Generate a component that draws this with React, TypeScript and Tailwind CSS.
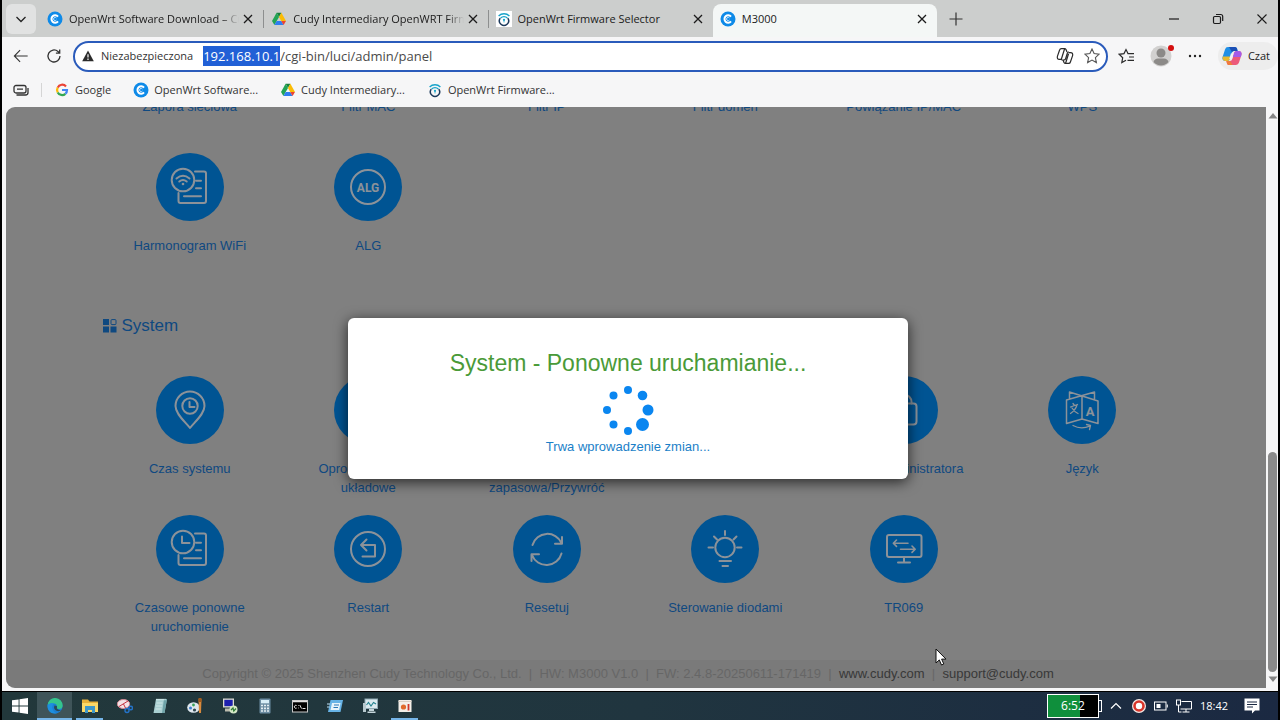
import { useEffect, useRef } from 'react';
import type { ReactNode } from 'react';
import { clsx } from 'clsx';

/* Favicons */
function CudyIcon() {
  return (
    <svg viewBox="0 0 16 16" className="size-4 shrink-0">
      <circle cx="8" cy="8" r="7.5" fill="#0e8ae8" />
      <path d="M11 5.6A3.7 3.7 0 1 0 11 10.4" fill="none" stroke="#fff" strokeWidth="2" />
      <path d="M9.4 7A1.6 1.6 0 1 0 9.4 9" fill="none" stroke="#bfe2ff" strokeWidth="1" />
    </svg>
  );
}

function DriveIcon() {
  return (
    <svg viewBox="0 0 16 16" className="size-4 shrink-0">
      <path d="M5.6 1.8h4.8L8 6z" fill="#188038" />
      <path d="M5.6 1.8L8 6 3.4 14 1 10z" fill="#22a455" />
      <path d="M10.4 1.8L15 10h-4.8L8 6z" fill="#fbbc04" />
      <path d="M5.7 10H10.2L12.6 14H3.4z" fill="#2f7df0" />
      <path d="M10.2 10H15l-2.4 4z" fill="#ea4335" />
    </svg>
  );
}

function OpenWrtIcon({ boxed = false }: { boxed?: boolean }) {
  return (
    <svg viewBox="0 0 16 16" className={clsx('size-4 shrink-0', boxed && 'bg-white')} fill="none">
      <path d="M2.6 5a7.6 7.6 0 0 1 10.8 0M4.6 7a4.8 4.8 0 0 1 6.8 0" stroke="#17a3c9" strokeWidth="1.3" />
      <path d="M4.2 7.2a4.6 4.6 0 1 0 7.6 0" stroke="#1c3a5c" strokeWidth="1.5" />
      <circle cx="8" cy="8.8" r="1.1" fill="#17a3c9" />
      <path d="M8 9v2.5" stroke="#17a3c9" strokeWidth="0.8" />
    </svg>
  );
}

function GoogleIcon() {
  return (
    <svg viewBox="0 0 16 16" className="size-4 shrink-0" fill="none" strokeWidth="2.2">
      <path d="M12 4.4A5 5 0 0 0 3.7 5.6" stroke="#ea4335" />
      <path d="M3.7 5.6a5 5 0 0 0 0 4.8" stroke="#fbbc04" />
      <path d="M3.7 10.4A5 5 0 0 0 11.4 11.8" stroke="#34a853" />
      <path d="M11.4 11.8A5 5 0 0 0 13 8H8" stroke="#4285f4" />
    </svg>
  );
}

function CloseIcon() {
  return (
    <svg viewBox="0 0 14 14" className="size-[14px] shrink-0" fill="none" stroke="#1b1b1b" strokeWidth="1.3">
      <path d="M3 3l8 8M11 3l-8 8" />
    </svg>
  );
}

const TABS = [
  { title: 'OpenWrt Software Download – Cudy', icon: <CudyIcon />, active: false },
  { title: 'Cudy Intermediary OpenWRT Firmware', icon: <DriveIcon />, active: false },
  { title: 'OpenWrt Firmware Selector', icon: <OpenWrtIcon boxed />, active: false },
  { title: 'M3000', icon: <CudyIcon />, active: true },
];

const BOOKMARKS = [
  { title: 'Google', icon: <GoogleIcon /> },
  { title: 'OpenWrt Software...', icon: <CudyIcon /> },
  { title: 'Cudy Intermediary...', icon: <DriveIcon /> },
  { title: 'OpenWrt Firmware...', icon: <OpenWrtIcon /> },
];

function TabStrip() {
  return (
    <div className="flex h-[37px] shrink-0 items-center bg-[#cccecd] pl-1">
      <button aria-label="Karty" className="flex size-[30px] items-center justify-center rounded-md bg-[#e1e2e2]">
        <svg viewBox="0 0 12 12" className="size-3" fill="none" stroke="#222" strokeWidth="1.3">
          <path d="M1.5 4L6 8.5 10.5 4" />
        </svg>
      </button>
      <div className="ml-1 flex min-w-0 flex-[0_1_897px] self-stretch pt-1">
        {TABS.map((tab, i) => (
          <div
            key={tab.title}
            className={clsx(
              'flex min-w-0 flex-1 items-center pr-2 pb-1 pl-[7px]',
              tab.active && 'rounded-t-lg bg-[#f4f7f6]',
            )}
          >
            {tab.icon}
            <span
              className={clsx(
                'ml-1.5 min-w-0 flex-1 overflow-hidden text-[11px] leading-4 whitespace-nowrap text-[#1b1b1b]',
                i < 2 && 'mask-r-from-90%',
              )}
            >
              {tab.title}
            </span>
            <button aria-label="Zamknij kartę" className="ml-0.5">
              <CloseIcon />
            </button>
            {i < 2 && <div className="-mr-2 ml-2 h-[18px] w-px bg-[#8d8f8f]" />}
          </div>
        ))}
      </div>
      <button aria-label="Nowa karta" className="ml-3">
        <svg viewBox="0 0 14 14" className="size-[14px]" stroke="#333" strokeWidth="1.2">
          <path d="M7 .5v13M.5 7h13" />
        </svg>
      </button>
      <div className="ml-auto flex items-center gap-8 pr-2.5">
        <button aria-label="Minimalizuj">
          <svg viewBox="0 0 12 12" className="size-3" stroke="#1b1b1b" strokeWidth="1.2">
            <path d="M1 6h10" />
          </svg>
        </button>
        <button aria-label="Przywróć">
          <svg viewBox="0 0 12 12" className="size-3" fill="none" stroke="#1b1b1b" strokeWidth="1.2">
            <rect x="1.5" y="3.5" width="7" height="7" rx="1.2" />
            <path d="M4 1.5h4.7a2 2 0 0 1 2 2V8" />
          </svg>
        </button>
        <button aria-label="Zamknij">
          <svg viewBox="0 0 12 12" className="size-3" stroke="#1b1b1b" strokeWidth="1.1">
            <path d="M1.5 1.5l9 9M10.5 1.5l-9 9" />
          </svg>
        </button>
      </div>
    </div>
  );
}

function Toolbar() {
  const urlRef = useRef<HTMLInputElement>(null);

  // host part of the address starts selected
  useEffect(() => {
    urlRef.current?.focus();
    urlRef.current?.setSelectionRange(0, 12);
  }, []);

  return (
    <div className="flex h-[38px] shrink-0 items-center">
      <button aria-label="Wstecz" className="ml-[11px]">
        <svg viewBox="0 0 18 18" className="size-4" fill="none" stroke="#333" strokeWidth="1.2">
          <path d="M16.5 9H1.5M8 2.5L1.5 9 8 15.5" />
        </svg>
      </button>
      <button aria-label="Odśwież" className="ml-[17px]">
        <svg viewBox="0 0 16 16" className="size-4" fill="none" stroke="#333" strokeWidth="1.3">
          <path d="M14 8a6 6 0 1 1-2-4.5l1.6 1.6M13.7 1.4v3.8H9.9" />
        </svg>
      </button>
      <div className="ml-[11px] flex h-[31px] min-w-0 flex-1 items-center rounded-full border-2 border-[#2a5bbb] bg-white pr-1.5 pl-[7px]">
        <svg viewBox="0 0 12 12" className="size-3 shrink-0">
          <path d="M6 .5L11.8 11.2H.2z" fill="#2b2b2b" />
          <path d="M6 4.2v3.4M6 8.6v1.3" stroke="#fff" strokeWidth="1.2" />
        </svg>
        <label htmlFor="url" className="ml-[7px] text-[11px] leading-4 text-[#333]">Niezabezpieczona</label>
        <input
          id="url"
          ref={urlRef}
          defaultValue="192.168.10.1/cgi-bin/luci/admin/panel"
          spellCheck={false}
          className="ml-2.5 min-w-0 flex-1 text-[13px] leading-5 text-[#4a4a4a] outline-none selection:bg-[#2160d6] selection:text-white"
        />
        <svg viewBox="0 0 18 18" className="size-[18px] shrink-0" fill="none" stroke="#2b2b2b" strokeWidth="1.2">
          <path d="M11 5L10 2.6Q9.6 1.6 8.4 1.6H5.4Q4 1.6 3.6 3L1.4 9.4Q.8 12.2 3.4 12.4H5" />
          <path d="M7 13l1 2.4q.4 1 1.6 1h3q1.4 0 1.8-1.4l2.2-6.4q.6-2.8-2-3H13" />
          <path d="M8.6 1.8L5.4 12q-.3 1 .8 1H8q1.2 0 1.6-1.2L11.4 6q.4-1 1.6-1M9.6 16.2l3-9.6" />
        </svg>
        <svg viewBox="0 0 16 16" className="ml-2.5 size-4 shrink-0" fill="none" stroke="#555" strokeWidth="1.1">
          <path d="M8 1l2.1 4.6 5 .6-3.7 3.4 1 5L8 12.1l-4.4 2.5 1-5L.9 6.2l5-.6z" />
        </svg>
      </div>
      <button aria-label="Ulubione" className="ml-2.5">
        <svg viewBox="0 0 18 16" className="h-4 w-[18px]" fill="none" stroke="#2b2b2b" strokeWidth="1.2">
          <path d="M10 5.5L8 1.5 6 5.6l-4.8.7 3.5 3.4-.9 4.9L8 12.3" />
          <path d="M9.5 5.6H16M11 9h5M9.5 12.4H16" />
        </svg>
      </button>
      <button aria-label="Profil" className="relative ml-3.5">
        <svg viewBox="0 0 22 22" className="size-[22px]">
          <circle cx="11" cy="11" r="10.5" fill="#d2d1d0" />
          <circle cx="11" cy="8" r="4.5" fill="#8c8a88" />
          <path d="M3.5 17q1-3.5 4.5-3.5h6q3.5 0 4.5 3.5a10 10 0 0 1-15 0z" fill="#8c8a88" />
        </svg>
        <span className="absolute top-0 -right-0.5 size-[6px] rounded-full bg-[#d40f0f]" />
      </button>
      <button aria-label="Więcej" className="ml-4">
        <svg viewBox="0 0 14 4" className="h-1 w-[14px]" fill="#222">
          <circle cx="2" cy="2" r="1.2" />
          <circle cx="7" cy="2" r="1.2" />
          <circle cx="12" cy="2" r="1.2" />
        </svg>
      </button>
      <button className="ml-4 flex h-7 items-center gap-1.5 rounded-full bg-[#ededed] pr-2 pl-1 text-[11px] leading-4 text-[#222]">
        <svg viewBox="0 0 20 20" className="size-5">
          <path d="M6 1h7q1.5 0 2 1.6L15.6 5H12q-1.700 0-2.300 2L8 13q-.7 2-2.600 2H3Q-.3 14.600.6 11L3 3.400Q3.700 1 6 1z" fill="#1f8fe6" />
          <path d="M6 1h7q1.500 0 2 1.600L15.600 5H12q-1.400 0-2 1.300L7 1z" fill="#1b4fb5" />
          <path d="M.6 11q-.6 3.500 2.400 4h2.400q1.900 0 2.600-2l.7-2.500H.8z" fill="#e8b92e" />
          <path d="M14 19H7q-1.500 0-2-1.600L4.400 15H8q1.700 0 2.300-2L12 7q.7-2 2.600-2H17q3.300.4 2.400 4L17 16.600Q16.300 19 14 19z" fill="#ec5a7a" />
          <path d="M14.600 5H17q3.300.4 2.400 4l-.6 2h-7.900L12 7q.7-2 2.600-2z" fill="#a45be8" />
          <path d="M7 19q-1.500 0-2-1.600L4.400 15H8l2.500 4z" fill="#f07c3a" />
          <path d="M8.900 7.500h2.700l-1.800 5.800H7.200z" fill="#f2f2f2" />
        </svg>
        Czat
      </button>
    </div>
  );
}

function BookmarksBar() {
  return (
    <div className="flex h-8 shrink-0 items-center pb-0.5 text-[11px] leading-4 text-[#333]">
      <svg viewBox="0 0 16 12" className="ml-[11px] h-3 w-4 shrink-0" fill="none" stroke="#333" strokeWidth="1.3">
        <rect x="1" y="1.5" width="12" height="7.5" rx="2" />
        <path d="M4 5.2h6M3.500 11h9q2.500 0 2.500-2.500V4" />
      </svg>
      <div className="ml-3 h-3.5 w-px bg-[#d5d5d5]" />
      <div className="ml-3 flex gap-[22px]">
        {BOOKMARKS.map((b) => (
          <a key={b.title} href="#" className="flex items-center gap-[5px] whitespace-nowrap">
            {b.icon}
            {b.title}
          </a>
        ))}
      </div>
    </div>
  );
}

/* Router panel icons, all drawn on a 68x68 disc */
const DOC = (
  <path d="M39 18.5h9q2 0 2 2V48q0 2-2 2H24.5q-2 0-2-2v-8M40 27.7h5M40 35.3h5M28 43.3h17" />
);

const ICONS: Record<string, ReactNode> = {
  schedule: (
    <>
      {DOC}
      <circle cx="27" cy="27" r="11.3" />
      <path d="M20.5 25.5q6.5-5.500 13 0M23.300 28.500q3.700-3 7.400 0" />
      <circle cx="27" cy="31" r="1.3" fill="currentColor" stroke="none" />
    </>
  ),
  alg: (
    <>
      <circle cx="34" cy="34" r="17" />
      <text x="34" y="38.5" textAnchor="middle" className="font-['Roboto'] text-[12px] font-bold" fill="currentColor" stroke="none">
        ALG
      </text>
    </>
  ),
  time: (
    <>
      <path d="M34 52C29 45.500 19.500 38 19.500 30a14.500 14.500 0 0 1 29 0C48.500 38 39 45.500 34 52z" />
      <circle cx="34" cy="30" r="7.7" />
      <path d="M33.5 26v5h5" />
    </>
  ),
  timedReboot: (
    <>
      {DOC}
      <circle cx="27" cy="27" r="11.3" />
      <path d="M26 21.5V28h7.5" />
    </>
  ),
  restart: (
    <>
      <circle cx="34" cy="34" r="17" />
      <path d="M28.5 41.5H41V30H27M32.5 24.5L27 30l5.5 5.5" />
    </>
  ),
  reset: (
    <>
      <path d="M19.5 30A15.5 15.5 0 0 1 48.5 28M49 22v6.700h-7" />
      <path d="M48.5 38.5A15.5 15.5 0 0 1 19 40M18.500 46v-6.700h7.500" />
    </>
  ),
  bulb: (
    <>
      <circle cx="34" cy="32.5" r="9.7" />
      <path d="M34 16v4M23 21.5l3 3M45.5 21.5l-3 3M17.5 32.5h4.5M46 32.5h4.5M28.500 46h11.500M31.500 51h5.500" />
    </>
  ),
  tr069: (
    <>
      <rect x="17" y="20" width="34.5" height="22" rx="2" />
      <path d="M34 42v5.3M28 47.5h12" />
      <path d="M23.5 28.2H38M26.5 25l-3.2 3.2 3.2 3.2M30.5 34.2H45M42 31l3.2 3.2L42 37.4" strokeWidth="1.6" />
    </>
  ),
  password: (
    <>
      <rect x="22" y="27.5" width="24.5" height="21" rx="3" />
      <path d="M26.5 27.5V26a7.5 7.5 0 0 1 15 0v1.5" />
    </>
  ),
  language: (
    <>
      <path d="M34 21v22L18.500 47.500V24L46.500 16v7M34 43l16 4.500V25L21.500 16v6.500" strokeWidth="1.500" />
      <path d="M22.500 31l7-2.500M25 27.500l1.500 2M29 29q-1.500 5-6.500 8.500M24 32q2.500 4 6 5.500" strokeWidth="1.300" />
      <path d="M25 49.500q8 4.500 17 .5M38.500 48.500l4 1-1 4" strokeWidth="1.300" />
      <text x="42" y="39.5" textAnchor="middle" className="font-['Roboto'] text-[13px] font-bold" fill="currentColor" stroke="none">
        A
      </text>
    </>
  ),
};

const TOP_ITEMS = [
  { label: 'Zapora sieciowa' },
  { label: 'Filtr MAC' },
  { label: 'Filtr IP' },
  { label: 'Filtr domen' },
  { label: 'Powiązanie IP/MAC' },
  { label: 'WPS' },
  { label: 'Harmonogram WiFi', icon: 'schedule' },
  { label: 'ALG', icon: 'alg' },
];

const SYSTEM_ITEMS = [
  { label: 'Czas systemu', icon: 'time' },
  { label: 'Oprogramowanie układowe' },
  { label: 'Kopia zapasowa/Przywróć' },
  { label: '' },
  { label: 'Hasło administratora', icon: 'password' },
  { label: 'Język', icon: 'language' },
  { label: 'Czasowe ponowne uruchomienie', icon: 'timedReboot' },
  { label: 'Restart', icon: 'restart' },
  { label: 'Resetuj', icon: 'reset' },
  { label: 'Sterowanie diodami', icon: 'bulb' },
  { label: 'TR069', icon: 'tr069' },
];

function Tile({ label, icon }: { label: string; icon?: string }) {
  return (
    <a href="#" className="flex flex-col items-center px-5 pb-[18px] text-center">
      <svg
        viewBox="0 0 68 68"
        className="size-[68px] rounded-full bg-[#008cf5] text-[#eaf4ff]"
        fill="none"
        stroke="currentColor"
        strokeWidth="2"
        strokeLinecap="round"
        strokeLinejoin="round"
      >
        {icon && ICONS[icon]}
      </svg>
      <span className="mt-[15px] min-h-[38px] text-[13px] leading-[19px]">{label}</span>
    </a>
  );
}

function TileGrid({ items }: { items: { label: string; icon?: string }[] }) {
  return (
    <div className="grid grid-cols-6">
      {items.map((item, i) => (
        <Tile key={i} {...item} />
      ))}
    </div>
  );
}

/* Spinner dots: x, y, radius */
const DOTS = [
  [26, 6, 4],
  [40.5, 11.5, 4.8],
  [46, 26, 5.5],
  [40.5, 40.5, 6.5],
  [26, 47, 4],
  [11.5, 40.5, 4],
  [5, 26, 4],
  [11.5, 11.5, 4],
];

function RebootDialog() {
  return (
    <div className="absolute inset-0 flex items-center justify-center bg-black/40 pt-0.5 pr-4">
      <div
        role="dialog"
        className="flex w-[45%] flex-col items-center rounded-md bg-white px-5 pt-[30px] pb-[22px] shadow-[0_3px_14px_rgba(0,0,0,0.7)]"
      >
        <h2 className="text-[23px] leading-[30px] whitespace-nowrap text-[#4a9a38]">System - Ponowne uruchamianie...</h2>
        <svg viewBox="0 0 52 52" className="mt-[6px] size-[52px]" fill="#0a86f0">
          {DOTS.map(([x, y, r], i) => (
            <circle key={i} cx={x} cy={y} r={r} />
          ))}
        </svg>
        <p className="text-[13px] leading-[21px] text-[#1b7fc8]">Trwa wprowadzenie zmian...</p>
      </div>
    </div>
  );
}

function RouterPage() {
  return (
    <main className="relative flex min-w-0 flex-1 flex-col justify-end overflow-hidden rounded-l-[9px] bg-[#d5d5d5] font-['Liberation_Sans',sans-serif] text-[#1a7ad6]">
      <div className="mx-auto w-[85%]">
        <TileGrid items={TOP_ITEMS} />
        <h1 className="mt-[22px] mb-[38px] flex items-center gap-[5px] pl-0.5 text-[17px] leading-6">
          <svg viewBox="0 0 14 14" className="size-[14px]" fill="currentColor">
            <rect x="0" y="0" width="6" height="6" />
            <rect x="0" y="7.5" width="6" height="6" />
            <rect x="7.5" y="7.5" width="6" height="6" />
            <rect x="8" y=".6" width="5" height="5" rx="1" fill="none" stroke="currentColor" />
          </svg>
          System
        </h1>
        <TileGrid items={SYSTEM_ITEMS} />
      </div>
      <footer className="mt-[6px] bg-[#cbcbcb] pr-4 text-center text-[13px] leading-7 text-[#ababab]">
        Copyright © 2025 Shenzhen Cudy Technology Co., Ltd. &nbsp;|&nbsp; HW: M3000 V1.0 &nbsp;|&nbsp; FW: 2.4.8-20250611-171419
        &nbsp;|&nbsp; <a href="#" className="text-[#606060]">www.cudy.com</a> &nbsp;|&nbsp;{' '}
        <a href="#" className="text-[#606060]">support@cudy.com</a>
      </footer>
      <RebootDialog />
    </main>
  );
}

function Scrollbar() {
  return (
    <div className="flex w-3 shrink-0 flex-col items-center py-1.5 pr-px pl-0.5">
      <svg viewBox="0 0 10 6" className="h-1.5 w-2.5" fill="#858585">
        <path d="M5 0l4.500 5.500H.5z" />
      </svg>
      <div className="flex w-full flex-1 flex-col justify-end py-1">
        <div className="h-[40%] rounded-full bg-[#8a8a8a]" />
      </div>
      <svg viewBox="0 0 10 6" className="h-1.5 w-2.5" fill="#858585">
        <path d="M5 6l4.500-5.500H.5z" />
      </svg>
    </div>
  );
}

/* Taskbar */
const TASKS: { name: string; open?: boolean; current?: boolean; icon: ReactNode }[] = [
  {
    name: 'Start',
    icon: <path d="M0 2.300l6.600-.9v6.200H0zM7.500 1.300L16 0v7.600H7.500zM0 8.400h6.600v6.200L0 13.700zM7.500 8.400H16V16l-8.500-1.300z" fill="#fff" />,
  },
  {
    name: 'Edge',
    open: true,
    current: true,
    icon: (
      <>
        <circle cx="8" cy="8" r="7.600" fill="#1b7fd4" />
        <path d="M.6 7A7.500 7.500 0 0 1 15.600 8q-.3 3-3.300 3-3 0-2.300-1.600Q10.500 6 7 5.500 3 5 .6 7z" fill="#35c48c" />
        <path d="M.6 7q3-3 6.400-1.500Q5 7 5.200 10q.8 4 4.800 5.300Q4 16.500 1.400 12q-1-2.500-.8-5z" fill="#1d8fe0" />
        <path d="M7.500 7.500q-1.500 3 1.500 5 3 1.500 5.500-.5-1.500.6-3.500-.4-1.800-1-1-2.600.3-1.500-2.500-1.500z" fill="#2b4a57" />
      </>
    ),
  },
  {
    name: 'Eksplorator plików',
    open: true,
    icon: (
      <>
        <path d="M0 1.500h6l1.500 2H16V14H0z" fill="#e8b13a" />
        <path d="M0 5h16v9H0z" fill="#fbd867" />
        <path d="M3 8h10v7h-3v-3H6v3H3z" fill="#3e97c9" />
      </>
    ),
  },
  {
    name: 'Wycinanie',
    icon: (
      <>
        <ellipse cx="6.500" cy="6" rx="6.200" ry="4.500" fill="#f3e3e6" stroke="#d58b95" />
        <path d="M2 8.500l9-5.500M6.500 6l2 4" stroke="#c5303f" strokeWidth="1" />
        <circle cx="10" cy="12.500" r="2" fill="none" stroke="#2473c9" strokeWidth="1.400" />
        <circle cx="13.700" cy="10" r="1.800" fill="none" stroke="#2473c9" strokeWidth="1.400" />
      </>
    ),
  },
  {
    name: 'Notatnik',
    icon: (
      <>
        <path d="M4 1h11l-2.500 14H1.500z" fill="#a9cfd1" />
        <path d="M12 1h3l-2.500 14H10z" fill="#6fa3a8" />
        <path d="M4.500 1.500h9" stroke="#e7f4f4" strokeDasharray="1 1" strokeWidth="1.500" />
        <path d="M4.500 5h6M4 8h6M3.500 11h6" stroke="#d9eeee" strokeWidth=".8" />
      </>
    ),
  },
  {
    name: 'Paint',
    icon: (
      <>
        <ellipse cx="6.500" cy="9.500" rx="6.300" ry="5.300" fill="#dfe8ee" />
        <circle cx="3.500" cy="10" r="1.500" fill="#3e7fd0" />
        <circle cx="6.500" cy="7" r="1.400" fill="#3aa35a" />
        <circle cx="7.500" cy="12" r="1.600" fill="#2f454d" />
        <path d="M11.500 1h3l-.5 14h-2z" fill="#d98a3c" />
        <path d="M11.500 0h3v4h-3z" fill="#a35a1c" />
      </>
    ),
  },
  {
    name: 'PuTTY',
    icon: (
      <>
        <rect x="1" y=".5" width="11" height="9" fill="#dcdccf" />
        <rect x="2.300" y="1.800" width="8.400" height="6.400" fill="#1d1fae" />
        <path d="M3 10.500h7v3H3z" fill="#bcbcae" />
        <circle cx="11.500" cy="11.500" r="4" fill="#d5e8c6" />
        <path d="M9 12l2-2 .8 3 2.200-2.500" fill="none" stroke="#2f7a34" strokeWidth="1.200" />
      </>
    ),
  },
  {
    name: 'Kalkulator',
    icon: (
      <>
        <rect x="2.500" y=".5" width="11" height="15" rx="1" fill="#6d8da3" />
        <rect x="4" y="2" width="8" height="3.300" fill="#d8eef8" />
        <path d="M4 7.500h8M4 10.300h8M4 13h8" stroke="#e4edf2" strokeWidth="1.700" strokeDasharray="2 1" />
      </>
    ),
  },
  {
    name: 'Wiersz polecenia',
    icon: (
      <>
        <rect x=".5" y="2.500" width="15" height="11.500" fill="#000" stroke="#c8c8c8" />
        <path d="M1 3.500h14" stroke="#e2e2e2" strokeWidth="1.500" />
        <path d="M4.600 7.500a1.500 1.500 0 1 0 0 2.600M6 7.500h.6M6 10h.6M7.800 7l1.700 3.500M10.500 10.500h3" stroke="#fff" fill="none" strokeWidth=".9" />
      </>
    ),
  },
  {
    name: 'Uruchamianie',
    icon: (
      <>
        <path d="M3.500 2H16l-2.500 12H1z" fill="#67b3e6" />
        <path d="M5 5h8.500l-1.400 7H3.500z" fill="#e8f4fb" />
        <path d="M7 7h5M6.500 9.500h4.500" stroke="#2d79b8" strokeWidth="1.200" />
        <path d="M0 6h3M0 9h2.500" stroke="#bfe0f5" />
      </>
    ),
  },
  {
    name: 'Monitor wydajności',
    icon: (
      <>
        <rect x="3" y="1" width="12.500" height="9.500" fill="#dbe9ee" stroke="#8fa9b3" />
        <path d="M4.500 7l2-2.500L9 8l2.500-3.500L14 6" fill="none" stroke="#24828f" strokeWidth="1.100" />
        <path d="M1 5h3v9H1z" fill="#b8c9cf" />
        <path d="M7 11h5v2H7zM5.500 13.500h8V15h-8z" fill="#c5d5da" />
      </>
    ),
  },
  {
    name: 'Nagrywanie',
    open: true,
    icon: (
      <>
        <rect x="1.500" y="2" width="13" height="12" fill="#f4efe9" />
        <path d="M1.500 3.500h13" stroke="#d9cfc4" />
        <circle cx="6.500" cy="9" r="2.600" fill="#e06a2c" />
        <path d="M11.500 6v6.500" stroke="#d0382c" strokeWidth="1.800" />
      </>
    ),
  },
];

function Taskbar() {
  return (
    <div className="flex h-7 shrink-0 items-center bg-linear-to-r from-[#22383b] via-[#20353f] to-[#1b2942] font-['Open_Sans',sans-serif] text-white">
      {TASKS.map((t) => (
        <button
          key={t.name}
          aria-label={t.name}
          className={clsx('flex h-full w-[35px] items-center justify-center', t.current ? 'bg-[#3f5459]' : 'px-1')}
        >
          <span className={clsx('flex h-full flex-1 items-center justify-center border-y-2 border-transparent', t.open && 'border-b-[#76b5e8]')}>
            <svg viewBox="0 0 16 16" className="size-4">{t.icon}</svg>
          </span>
        </button>
      ))}
      <div className="ml-auto flex items-center pr-[18px]">
        <div className="flex h-6 w-[52px] items-center justify-center border border-white bg-linear-to-r from-[#0f8f3c] from-65% to-black to-65% text-xs">
          6:52
        </div>
        <div className="h-3 w-[3px] border border-l-0 border-white" />
        <svg viewBox="0 0 12 12" className="ml-2 size-3" fill="none" stroke="#fff" strokeWidth="1.2">
          <path d="M1 8.500l5-5 5 5" />
        </svg>
        <svg viewBox="0 0 14 14" className="ml-2.5 size-[14px]">
          <circle cx="7" cy="7" r="7" fill="#f4e9e6" />
          <circle cx="7" cy="7" r="4.500" fill="#fff" stroke="#d8352a" strokeWidth="2.600" />
        </svg>
        <svg viewBox="0 0 14 10" className="ml-2 h-2.5 w-[14px]" fill="none" stroke="#fff">
          <rect x=".5" y="1" width="11.500" height="8" />
          <path d="M13.300 3.500v3" />
          <rect x="2.500" y="3" width="4" height="4" fill="#fff" stroke="none" />
        </svg>
        <svg viewBox="0 0 16 14" className="ml-2 h-[14px] w-4" fill="none" stroke="#fff">
          <path d="M5.500 2.500h10v7.500H4.500M10 10v3M6.500 13h7M2.500 6v7h3" />
          <rect x=".5" y="1" width="4" height="5" />
        </svg>
        <span className="ml-2 text-[11px] leading-4">18:42</span>
        <svg viewBox="0 0 16 16" className="ml-4 size-4">
          <path d="M.5.500h15v12H11L8 15.500v-3H.5z" fill="#fff" />
          <path d="M3 4h10M3 6.500h10M3 9h6" stroke="#1b2942" />
        </svg>
      </div>
    </div>
  );
}

export default function App() {
  return (
    <div className="relative flex h-screen flex-col overflow-hidden bg-black px-0.5">
      <div className="mb-px flex min-h-0 flex-1 flex-col bg-[#f6f6f7] font-['Open_Sans',sans-serif]">
        <TabStrip />
        <Toolbar />
        <BookmarksBar />
        <div className="mb-[3px] ml-1 flex min-h-0 flex-1">
          <RouterPage />
          <Scrollbar />
        </div>
      </div>
      <Taskbar />
      <svg viewBox="0 0 12 18" className="pointer-events-none absolute top-[648px] left-[935px] h-[18px] w-3">
        <path d="M1 1v14l3.300-3.100L6.500 17l2.300-1-2.200-4.900H11z" fill="#fff" stroke="#111" />
      </svg>
    </div>
  );
}
